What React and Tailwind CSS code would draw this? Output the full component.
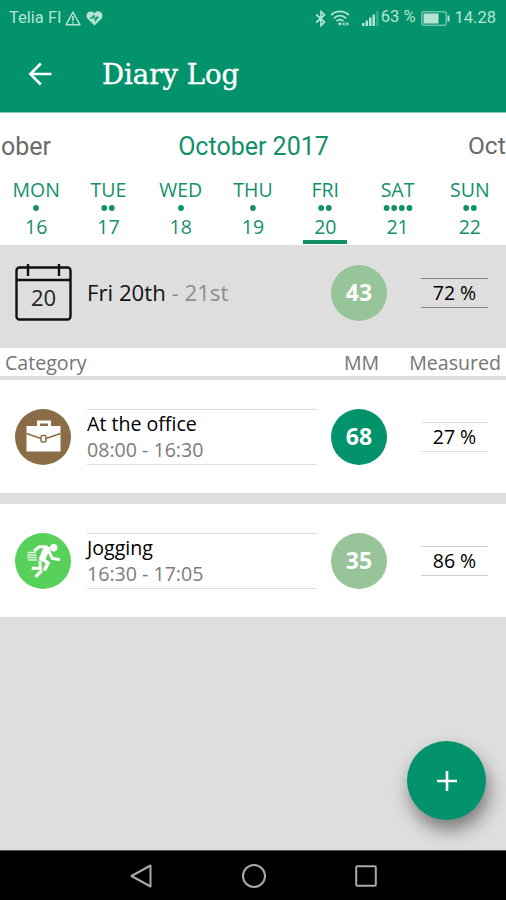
const days = [
  { name: "MON", date: 16, entries: 1 },
  { name: "TUE", date: 17, entries: 2 },
  { name: "WED", date: 18, entries: 1 },
  { name: "THU", date: 19, entries: 1 },
  { name: "FRI", date: 20, entries: 2 },
  { name: "SAT", date: 21, entries: 4 },
  { name: "SUN", date: 22, entries: 2 },
];

function StatusBar() {
  return (
    <div className="flex h-9 items-center pl-[9px] pr-[10px] font-['Roboto',sans-serif] text-[16.5px] leading-none text-[#b5e3d2]">
      <span>Telia FI</span>
      <svg className="ml-[3px] h-[15px] w-4" viewBox="0 0 16 15" fill="none" stroke="currentColor" strokeWidth="1.4">
        <path d="M8 1.2 15 13.8H1Z" strokeLinejoin="round" />
        <path d="M8 5v5M8 11v1.6" strokeWidth="1.7" />
      </svg>
      <svg className="ml-[5px] h-[15px] w-[17px]" viewBox="0 0 17 15">
        <path
          d="M8.5 14.6 1.9 8.1C-.2 5.8.2 2.8 2.2 1.3 4.2-.1 7 .3 8.5 2.4 10-.1 12.9-.1 14.8 1.3c2 1.5 2.4 4.5.3 6.8Z"
          fill="currentColor"
        />
        <path d="M4.2 7h2l1.5-2.3 2 4.8L11 6l1.7 1" fill="none" stroke="#02936c" strokeWidth="1.3" />
      </svg>

      <svg className="ml-auto h-[17px] w-3" viewBox="0 0 12 17" fill="none" stroke="currentColor" strokeWidth="1.7">
        <path d="M1.2 4.5 9.5 12 6 15.5v-14L9.5 5 1.2 12.5" />
      </svg>
      <svg className="ml-[3px] h-4 w-5" viewBox="0 0 20 16" fill="none" stroke="currentColor" strokeWidth="1.8">
        <path d="M1 5.2C6 .2 14 .2 19 5.2M3.8 8.3c3.7-3.6 8.7-3.6 12.4 0M6.6 11.2c2-1.9 4.8-1.9 6.8 0" />
        <circle cx="9.8" cy="13.8" r="1.5" fill="currentColor" stroke="none" />
        <path d="M12.5 14h6M14.5 12.3 12.5 14l2 1.5M16.5 12.3l2 1.7-2 1.5" strokeWidth="1" />
      </svg>
      <svg className="ml-3 h-[15px] w-[17px]" viewBox="0 0 17 15" fill="currentColor">
        <path d="M0 12h2.5v3H0zM3.5 9.5H6V15H3.5zM7 6.5h2.5V15H7zM10.5 3.5H13V15h-2.5z" />
        <path d="M14 0h2.5v15H14z" opacity=".3" />
      </svg>
      <span className="ml-[2px] -mt-[2px]">63 %</span>
      <svg className="ml-[5px] h-[15px] w-[29px]" viewBox="0 0 29 15">
        <rect x=".8" y=".8" width="24.4" height="13.4" rx="2" fill="none" stroke="currentColor" strokeWidth="1.5" opacity=".6" />
        <rect x="2.5" y="2.5" width="15" height="10" fill="currentColor" />
        <path d="M26.5 4.5h2v6h-2z" fill="currentColor" />
      </svg>
      <span className="ml-[5px]">14.28</span>
    </div>
  );
}

function Header() {
  return (
    <header className="h-[113px] border-b border-[#8fc9b7] bg-[#02936c]">
      <StatusBar />
      <div className="flex h-[76px] items-center pl-7">
        <svg className="h-6 w-6" viewBox="0 0 24 24" fill="none" stroke="#fff" strokeWidth="2.6">
          <path d="M23.5 12H2.5M12.8 1.5 2.3 12l10.5 10.5" />
        </svg>
        <h1 className="ml-[50px] pt-px font-['DejaVu_Serif',serif] text-[27.5px] leading-none text-white [-webkit-text-stroke:0.4px_#fff]">
          Diary Log
        </h1>
      </div>
    </header>
  );
}

function Calendar() {
  return (
    <section className="h-[132px] bg-white text-[#12906a]">
      <div className="grid h-[65px] grid-cols-[51px_1fr_38px] items-center pt-px font-['Roboto',sans-serif] text-[25px] leading-none text-[#6b6b6b]">
        <div className="flex justify-end">ober</div>
        <div className="-ml-[12px] text-center text-[#12906a]">October 2017</div>
        <div className="text-[24.5px]">Oct</div>
      </div>
      <div className="grid h-[67px] grid-cols-7 text-[19.5px] leading-none">
        {days.map((day) => (
          <div key={day.name} className="flex flex-col items-center">
            <span className="mt-[2px]">{day.name}</span>
            <svg className="mt-[5px] h-[6px] w-[30px] fill-[#12906a]" viewBox="0 0 30 6">
              {Array.from({ length: day.entries }, (_, i) => (
                <circle key={i} cx={15 + (i - (day.entries - 1) / 2) * 7.6} cy="3" r="2.9" />
              ))}
            </svg>
            <span className="mt-[6px]">{day.date}</span>
            {day.date === 20 && <span className="mt-[4px] h-1 w-11 shrink-0 bg-[#12906a]" />}
          </div>
        ))}
      </div>
    </section>
  );
}

function Score({ value, color }) {
  return (
    <div className={"ml-[14px] flex h-14 w-14 items-center justify-center rounded-full text-[23px] font-bold leading-none text-white " + color}>
      {value}
    </div>
  );
}

function Measured({ value, border }) {
  return (
    <div className={"ml-[34px] flex h-[30px] w-[67px] items-center justify-center border-y text-[19.5px] leading-none text-black " + border}>
      {value}
    </div>
  );
}

function DaySummary() {
  return (
    <section className="flex h-[103px] items-center bg-[#dedede] pb-[8px] pl-[15px]">
      <svg className="h-[57px] w-[57px]" viewBox="0 0 57 57" fill="none" stroke="#111" strokeWidth="2.4">
        <rect x="1.5" y="3.5" width="54" height="52" rx="3" />
        <path d="M1.5 16h54M13 0v12M44 0v12" />
        <text x="28.5" y="41.5" textAnchor="middle" fontSize="22" fill="#222" stroke="none">20</text>
      </svg>
      <div className="ml-[15px] w-[230px] pt-px text-[22.2px] leading-none text-[#111]">
        Fri 20th <span className="text-[#8e8e8e]">- 21st</span>
      </div>
      <Score value="43" color="bg-[#97c499]" />
      <Measured value="72 %" border="border-[#858585]" />
    </section>
  );
}

function Briefcase() {
  return (
    <svg className="h-14 w-14" viewBox="0 0 56 56">
      <circle cx="28" cy="28" r="28" fill="#8a6d47" />
      <path d="M23.5 17.5V13h11v4.5" fill="none" stroke="#fff" strokeWidth="3" />
      <path d="M11.5 17h34v25.5h-34z" fill="#fff" />
      <path d="M11.5 24.5 26 29.5M45.5 24.5 31 29.5" stroke="#8a6d47" strokeWidth="1.5" />
      <rect x="26" y="26.5" width="5" height="6.5" rx="1.5" fill="#fff" stroke="#8a6d47" strokeWidth="1.5" />
    </svg>
  );
}

function Runner() {
  return (
    <svg className="h-14 w-14" viewBox="0 0 56 56" fill="none" stroke="#fff">
      <circle cx="28" cy="28" r="28" fill="#57d15a" stroke="none" />
      <circle cx="38.7" cy="14.7" r="3.7" fill="#fff" stroke="none" />
      <path d="M19 18 24.3 13.8H31l4 2.5" strokeWidth="3" />
      <path d="M31.8 15 26.5 27.5" strokeWidth="6.5" />
      <path d="M33.5 17.5 37.3 25.3 45 26.7" strokeWidth="3" />
      <path d="M26.5 25.5 33 30 29.3 37.5" strokeWidth="3.6" />
      <path d="M24.8 27.5 25.5 35.2H16.7" strokeWidth="3" />
      <path d="M26.8 37.5 20.5 43.8" strokeWidth="3.2" />
      <path d="M12.5 19.5h8.5M12 22h9.5M12 24.5h10M13 27h9" strokeWidth="1.6" opacity=".8" />
    </svg>
  );
}

function Entry({ icon, title, time, score, color, measured, border }) {
  return (
    <div className="flex h-[113px] items-center bg-white pl-[15px]">
      {icon}
      <div className="ml-4 flex h-14 w-[230px] flex-col justify-center border-y border-[#dedede] pt-px text-[19.6px] leading-[26px]">
        <span className="text-black">{title}</span>
        <span className="text-[#7c7c7c]">{time}</span>
      </div>
      <Score value={score} color={color} />
      <Measured value={measured} border={border} />
    </div>
  );
}

function NavBar() {
  return (
    <nav className="flex h-[50px] shrink-0 items-center justify-between border-t border-[#555] bg-black pl-[130px] pr-[129px]">
      <svg className="h-6 w-[22px]" viewBox="0 0 22 24" fill="none" stroke="#aaa" strokeWidth="2">
        <path d="M20.5 1.5v21L1.5 12Z" strokeLinejoin="round" />
      </svg>
      <svg className="h-6 w-6" viewBox="0 0 24 24" fill="none" stroke="#aaa" strokeWidth="2">
        <circle cx="12" cy="12" r="11" />
      </svg>
      <svg className="h-[22px] w-[22px]" viewBox="0 0 22 22" fill="none" stroke="#aaa" strokeWidth="2">
        <rect x="1.2" y="1.2" width="19.6" height="19.6" rx="1" />
      </svg>
    </nav>
  );
}

export default function App() {
  return (
    <div className="relative flex h-[900px] w-[506px] flex-col overflow-hidden bg-[#dedede] font-['Open_Sans',sans-serif]">
      <Header />
      <Calendar />
      <DaySummary />
      <div className="flex h-7 items-center justify-end bg-white px-[5px] pt-px text-[19.6px] leading-none text-[#757575]">
        <span className="mr-auto">Category</span>
        <span>MM</span>
        <span className="ml-[30px]">Measured</span>
      </div>
      <main className="flex flex-1 flex-col gap-[11px] pt-1">
        <Entry
          icon={<Briefcase />}
          title="At the office"
          time="08:00 - 16:30"
          score="68"
          color="bg-[#02936c]"
          measured="27 %"
          border="border-[#dedede]"
        />
        <Entry
          icon={<Runner />}
          title="Jogging"
          time="16:30 - 17:05"
          score="35"
          color="bg-[#97c499]"
          measured="86 %"
          border="border-[#cfcfcf]"
        />
      </main>
      <button
        type="button"
        aria-label="Add entry"
        className="absolute bottom-20 right-5 flex h-[79px] w-[79px] items-center justify-center rounded-full bg-[#02936c] shadow-[3px_10px_18px_rgba(0,0,0,0.45)]"
      >
        <svg className="h-5 w-5" viewBox="0 0 20 20" stroke="#fff" strokeWidth="2.6">
          <path d="M10 0v20M0 10h20" />
        </svg>
      </button>
      <NavBar />
    </div>
  );
}
